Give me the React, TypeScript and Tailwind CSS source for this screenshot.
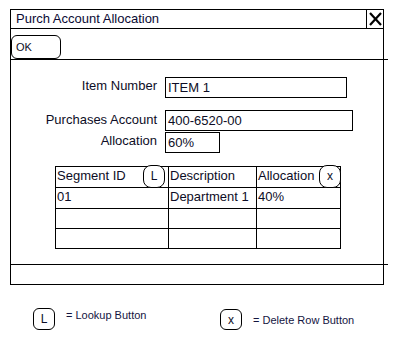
const font = "font-['Liberation_Sans',Arial,sans-serif]";

function CloseIcon() {
  return (
    <svg width="17" height="18" viewBox="0 0 17 18">
      <line x1="3" y1="3" x2="14" y2="15" stroke="black" strokeWidth="2.2" />
      <line x1="14" y1="3" x2="3" y2="15" stroke="black" strokeWidth="2.2" />
    </svg>
  );
}

function SmallBtn({ label, className }: { label: string; className: string }) {
  return (
    <div
      className={`flex items-center justify-center border border-black bg-white text-[12px] text-[#0d0d26] ${className}`}
    >
      {label}
    </div>
  );
}

const rows = [
  { seg: "01", desc: "Department 1", alloc: "40%" },
  { seg: "", desc: "", alloc: "" },
  { seg: "", desc: "", alloc: "" },
];

export default function App() {
  return (
    <div className={`w-[396px] h-[340px] bg-white pt-[9px] ${font}`}>
      {/* window */}
      <div className="ml-[10px] w-[374px] border border-black">
        {/* title bar */}
        <div className="flex h-[19px] border-b border-black">
          <div className="flex-1 pl-[5px] text-[13px] leading-[17px] text-[#0a0a33]">
            Purch Account Allocation
          </div>
          <div className="w-[17px] border-l border-black">
            <CloseIcon />
          </div>
        </div>

        {/* toolbar */}
        <div className="h-[30px] pt-[6px]">
          <div className="w-[50px] h-[24px] rounded-[6px] border border-black pl-[4px] text-[11px] leading-[22px] text-[#0d0d26]">
            OK
          </div>
        </div>
        <div className="h-px bg-black w-[377px]" />

        {/* body */}
        <div className="h-[204px] pt-[17px]">
          <div className="grid grid-cols-[146px_auto] gap-x-[8px] text-[13px] text-[#0d0d26]">
            <div className="text-right leading-[18px]">Item Number</div>
            <div className="w-[182px] h-[21px] border border-black pl-[2px] leading-[19px]">
              ITEM 1
            </div>

            <div className="mt-[13px] text-right leading-[18px]">Purchases Account</div>
            <div className="mt-[12px] w-[188px] h-[21px] border border-black pl-[2px] leading-[19px]">
              400-6520-00
            </div>

            <div className="mt-px text-right leading-[18px]">Allocation</div>
            <div className="mt-px w-[55px] h-[21px] border border-black pl-[2px] leading-[19px]">
              60%
            </div>
          </div>

          {/* segment table */}
          <div className="ml-[44px] mt-[13px] w-[286px] border-l border-t border-black grid grid-cols-[113px_88px_84px] text-[13px] text-[#0d0d26]">
            <div className="h-[21px] border-r border-b border-black flex justify-between pl-[1px] pr-[3px] leading-[17px]">
              <span>Segment ID</span>
              <SmallBtn label="L" className="-mt-[2px] w-[22px] h-[23px] rounded-[8px]" />
            </div>
            <div className="h-[21px] border-r border-b border-black pl-[1px] leading-[17px]">
              Description
            </div>
            <div className="h-[21px] border-r border-b border-black flex justify-between pl-[1px] leading-[17px]">
              <span>Allocation</span>
              <SmallBtn label="x" className="-mt-[2px] -mr-px w-[22px] h-[23px] rounded-[8px]" />
            </div>

            {rows.map((r, i) => (
              <div key={i} className="contents">
                <div
                  className={`${i === 0 ? "h-[21px]" : "h-[20px]"} border-r border-b border-black pl-[1px] leading-[18px]`}
                >
                  {r.seg}
                </div>
                <div
                  className={`${i === 0 ? "h-[21px]" : "h-[20px]"} border-r border-b border-black pl-[1px] leading-[18px]`}
                >
                  {r.desc}
                </div>
                <div
                  className={`${i === 0 ? "h-[21px]" : "h-[20px]"} border-r border-b border-black pl-[1px] leading-[18px]`}
                >
                  {r.alloc}
                </div>
              </div>
            ))}
          </div>
        </div>

        {/* status bar */}
        <div className="h-px bg-black w-[377px]" />
        <div className="h-[19px]" />
      </div>

      {/* legend */}
      <div className="flex ml-[33px] mt-[23px] text-[11px] text-[#14143f]">
        <div className="flex w-[187px]">
          <SmallBtn label="L" className="w-[22px] h-[22px] rounded-[6px]" />
          <span className="ml-[11px] leading-[14px]">= Lookup Button</span>
        </div>
        <div className="flex mt-px">
          <SmallBtn label="x" className="w-[22px] h-[21px] rounded-[6px]" />
          <span className="ml-[11px] mt-[4px] leading-[14px]">= Delete Row Button</span>
        </div>
      </div>
    </div>
  );
}
